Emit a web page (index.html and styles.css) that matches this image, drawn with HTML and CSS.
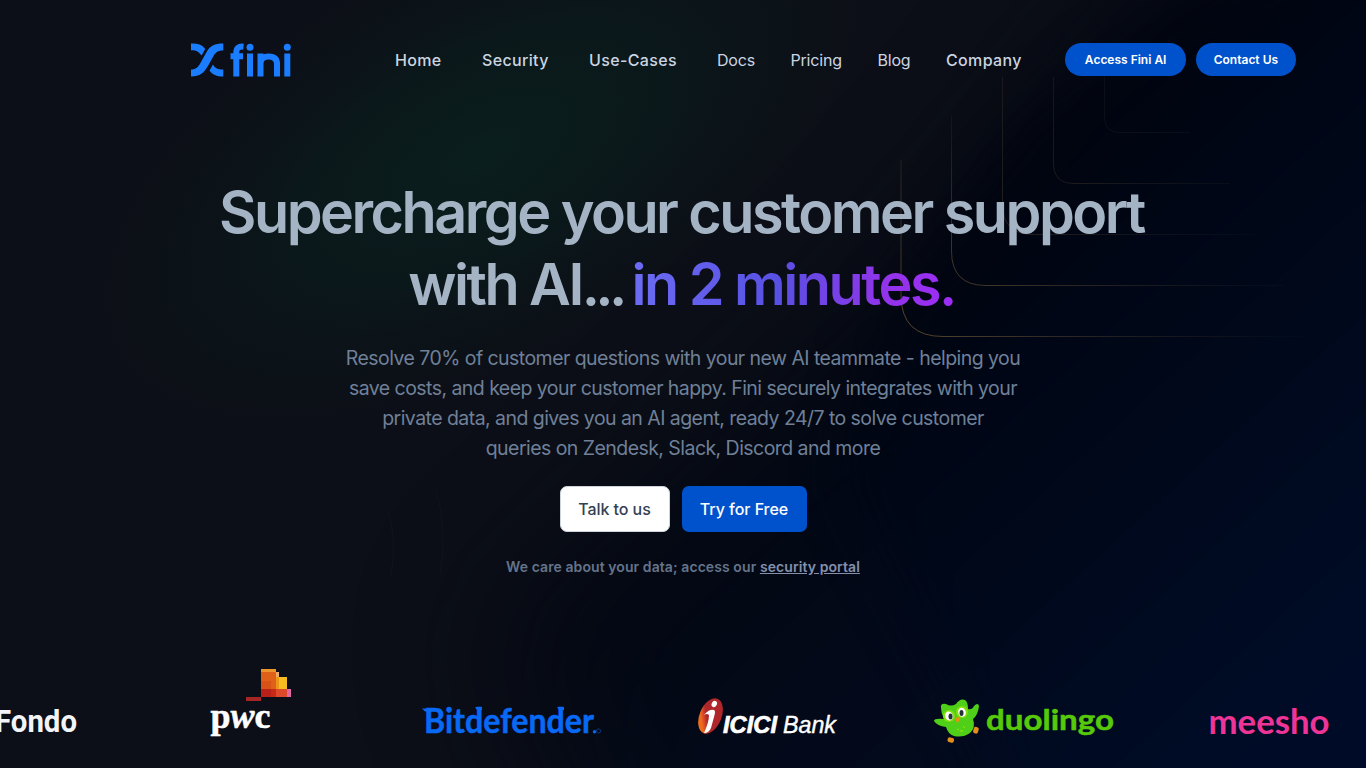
FILE: index.html
```html
<!DOCTYPE html>
<html lang="en">
<head>
<meta charset="utf-8">
<title>Fini</title>
<link rel="stylesheet" href="styles.css">
</head>
<body>
<div class="page">
<svg class="backdrop" viewBox="0 0 1366 768" aria-hidden="true">
  <defs>
    <filter id="soft" x="-50%" y="-50%" width="200%" height="200%" color-interpolation-filters="sRGB"><feGaussianBlur stdDeviation="26"/></filter>
    <filter id="wide" x="-50%" y="-50%" width="200%" height="200%" color-interpolation-filters="sRGB"><feGaussianBlur stdDeviation="70"/></filter>
    <linearGradient id="blue" gradientUnits="userSpaceOnUse" x1="1000" y1="180" x2="1400" y2="620"><stop offset="0" stop-color="#00040f"/><stop offset="1" stop-color="#000c28"/></linearGradient>
    <radialGradient id="green"><stop offset="0" stop-color="#0a1f1d"/><stop offset=".5" stop-color="#0a1c1c" stop-opacity=".65"/><stop offset="1" stop-color="#0b171b" stop-opacity="0"/></radialGradient>
    <linearGradient id="fade" gradientUnits="userSpaceOnUse" x1="900" y1="337" x2="1200" y2="37"><stop offset="0" stop-color="#5d482d" stop-opacity=".95"/><stop offset=".5" stop-color="#363029" stop-opacity=".65"/><stop offset="1" stop-color="#252a33" stop-opacity=".15"/></linearGradient>
    <linearGradient id="across" gradientUnits="userSpaceOnUse" x1="940" y1="0" x2="1320" y2="0"><stop offset="0" stop-color="#4e3f2c"/><stop offset="1" stop-color="#2b2a2a" stop-opacity="0"/></linearGradient>
    <linearGradient id="up" gradientUnits="userSpaceOnUse" x1="0" y1="310" x2="0" y2="80"><stop offset="0" stop-color="#4e3f2c"/><stop offset=".5" stop-color="#3a3129" stop-opacity=".8"/><stop offset="1" stop-color="#2b2a2a" stop-opacity="0"/></linearGradient>
  </defs>
  <rect width="1366" height="768" fill="#0c0f17"/>
  <path d="M1170 -60L1700 -100V1000H700L480 640L720 430L880 300L1040 110Z" fill="url(#blue)" opacity=".75" filter="url(#wide)"/>
  <path d="M1180 0L1700 -200V1000H1120L840 480L880 310L1020 120Z" fill="url(#blue)" opacity=".8" filter="url(#soft)"/>
  <ellipse cx="480" cy="155" rx="420" ry="205" transform="rotate(-28 480 155)" fill="url(#green)"/>
  <g fill="none" stroke="url(#fade)">
    <path d="M1104.500 77V117Q1104.500 132.500 1120 132.500H1190" opacity=".6"/>
    <path d="M1053.500 77V163Q1053.500 183.500 1074 183.500" opacity=".8"/>
    <path d="M1002.500 77V204Q1002.500 234.500 1033 234.500" opacity=".75"/>
    <path d="M986 285.500Q951.500 285.500 951.500 251"/>
    <path d="M943 336.500Q901 336.500 901 295"/>
  </g>
  <g fill="url(#across)"><path d="M1074 183h156v1h-156z" opacity=".7"/><path d="M1033 234h223v1h-223z" opacity=".6"/><path d="M986 285h298v1H986z"/><path d="M943 336h367v1H943z"/></g>
  <g fill="url(#up)"><path d="M951 115h1v136h-1z"/><path d="M900.500 160h1v135h-1z"/></g>
  <path d="M436 490Q448 530 440 575M388 510Q397 540 391 575" opacity=".5" fill="none" stroke="#141922"/>
</svg>
<header class="nav">
  <svg class="brand" viewBox="0 0 101 36" role="img" aria-label="fini">
    <g fill="#1a7cff">
      <path d="M0 .500C7 .500 11 1.500 14.200 6L10.600 12.500L8 9.800C6 7.800 4 7.200 0 7.200Z"/>
      <path d="M32.300 .500V7.500C27 7.500 25 9 22.500 13L17.500 22C13 30 9 33.500 0 33.500V26.500C5 26.500 7 24.500 10 19L15 10C19 2.500 23.500 .500 32.300 .500Z"/>
      <path d="M18.500 27.500L22 21.500C24 25.500 27 26.500 32.300 26.500V33.500C25.500 33.500 21.500 31.500 18.500 27.500Z"/>
      <circle cx="59" cy="4.200" r="3.500"/><circle cx="96.300" cy="4.200" r="3.500"/>
    </g>
    <path d="M45.300 33.500V10C45.300 4.800 47.500 3.200 52.500 3.700M39.500 13.200H52M59 10.500V33.500M69.500 10.500V33.500M69.500 20.500Q69.500 13.500 77.700 13.500Q86 13.500 86 21V33.500M96.300 10.500V33.500" fill="none" stroke="#1a7cff" stroke-width="6"/>
  </svg>
  <nav class="links">
    <a class="strong">Home</a><a class="strong">Security</a><a class="strong">Use-Cases</a><a>Docs</a><a>Pricing</a><a>Blog</a><a class="strong">Company</a>
  </nav>
  <div class="actions"><a class="pill access">Access Fini AI</a><a class="pill contact">Contact Us</a></div>
</header>
<main class="hero">
  <h1>Supercharge your customer support<br><span class="second">with AI<span class="dots">...</span> <span class="accent">in 2 minutes.</span></span></h1>
  <p class="lead">Resolve 70% of customer questions with your new AI teammate - helping you<br>save costs, and keep your customer happy. Fini securely integrates with your<br>private data, and gives you an AI agent, ready 24/7 to solve customer<br>queries on Zendesk, Slack, Discord and more</p>
  <div class="cta"><a class="btn white">Talk to us</a><a class="btn primary">Try for Free</a></div>
  <p class="note">We care about your data; access our <a>security portal</a></p>
</main>
<section class="logos">
  <svg class="fondo" viewBox="0 0 77 110"><text x="-5" y="82" textLength="82" lengthAdjust="spacingAndGlyphs" font-family="Roboto" font-weight="700" font-size="31" fill="#f3f4f7">Fondo</text></svg>
  <svg class="pwc" viewBox="210 650 82 110">
    <g shape-rendering="crispEdges"><path d="M246 697h15v4h-15z" fill="#a82525"/><path d="M261 669h15v28h-15z" fill="#df6119"/><path d="M261 669h15v3h-15z" fill="#eb952c"/><path d="M261 681h10v8h-10z" fill="#d75217"/><path d="M276 672h3v5h-3z" fill="#eeaa65"/><path d="M279 677h8v12h-8z" fill="#f6bd20"/><path d="M276 677h3v12h-3z" fill="#ee9518"/><path d="M261 689h15v8h-15z" fill="#c72918"/><path d="M261 689h10v8h-10z" fill="#b92018"/><path d="M276 689h11v8h-11z" fill="#dc492b"/><path d="M287 689h4v8h-4z" fill="#df69a0"/></g>
    <text x="210.500" y="727.500" textLength="60" lengthAdjust="spacingAndGlyphs" font-family="Liberation Serif, serif" font-weight="700" font-size="35" fill="#fff" stroke="#fff" stroke-width=".5">p<tspan font-style="italic">w</tspan>c</text>
  </svg>
  <svg class="bit" viewBox="422 650 180 110"><text x="424" y="733" textLength="170" lengthAdjust="spacingAndGlyphs" font-family="Lato" font-weight="700" font-size="34" fill="#0869f5" stroke="#0869f5" stroke-width=".5">Bitdefender</text><path d="M422 708.500h8v3h-5zM475 707h7v3h-5zM557 707h7v3h-5z" fill="#0869f5"/><circle cx="594.500" cy="731.800" r="1.700" fill="#0869f5"/><circle cx="598.500" cy="731" r="2.100" fill="none" stroke="#0a4194" stroke-width=".8"/></svg>
  <svg class="icici" viewBox="696 650 142 110">
    <defs><linearGradient id="ic" x1="1" y1="0" x2="0" y2="1"><stop offset=".6" stop-color="#b0272b"/><stop offset=".75" stop-color="#ed671e"/><stop offset="1" stop-color="#f58220"/></linearGradient></defs>
    <ellipse cx="710.500" cy="716" rx="11" ry="18.500" transform="rotate(22 710.500 716)" fill="url(#ic)"/>
    <ellipse cx="714.300" cy="704" rx="2.600" ry="3.200" transform="rotate(25 714.300 704)" fill="#fff"/>
    <path d="M704 715Q709 709 714 710Q716 711 714 717L711 728Q709 733 704 733Q709 722 709 715Q707 713 704 715Z" fill="#fff"/>
    <text x="723" y="733" textLength="54" lengthAdjust="spacingAndGlyphs" font-family="Liberation Sans" font-weight="700" font-style="italic" font-size="23.500" fill="#fff" stroke="#fff" stroke-width=".7">ICICI</text>
    <text x="783" y="733" textLength="53" lengthAdjust="spacingAndGlyphs" font-family="Liberation Sans" font-style="italic" font-size="23.500" fill="#fff" stroke="#fff" stroke-width=".4">Bank</text>
  </svg>
  <svg class="duo" viewBox="933 650 182 110">
    <path d="M941 708Q940 703 946 704Q951 707 956 704Q960 698 965 700Q968 702 968 709Q972 710 974 706Q978 702 979 706Q978 715 973 719Q976 728 970 733Q963 738 954 736Q948 734 946 727Q937 726 934 721Q934 718 944 719Q941 713 941 708Z" fill="#4fcf17"/>
    <g fill="#83df0c"><circle cx="949" cy="716" r="6"/><circle cx="962" cy="712" r="6"/></g>
    <g fill="#fff"><ellipse cx="949" cy="716" rx="3.800" ry="4.600" transform="rotate(-15 949 716)"/><ellipse cx="962" cy="712.300" rx="3.800" ry="4.600" transform="rotate(-15 962 712.300)"/></g>
    <g fill="#263238"><ellipse cx="950.500" cy="716.500" rx="2" ry="3"/><ellipse cx="961.500" cy="713" rx="2" ry="3"/></g>
    <path d="M955 718l4-1 1 3-3 3z" fill="#ed8b12"/><path d="M957 729l2 1M963 726l2 2M960 731l3 0" stroke="#91e516"/>
    <g fill="#e88c1c"><rect x="973.500" y="727" width="5" height="6.500" rx="2" transform="rotate(18 976 730)"/><rect x="947.500" y="737.500" width="6.500" height="4.800" rx="2" transform="rotate(15 950 740)"/></g>
    <text x="986" y="729.500" textLength="128" lengthAdjust="spacingAndGlyphs" font-family="Lato" font-weight="700" font-size="29" fill="#57c90b" stroke="#57c90b" stroke-width=".5" stroke-linejoin="round">duolingo</text>
  </svg>
  <svg class="meesho" viewBox="1209 650 122 110"><text x="1208.500" y="734" textLength="121" lengthAdjust="spacingAndGlyphs" font-family="Lato" font-weight="700" font-size="34" fill="#ee3597">meesho</text></svg>
</section>
</div>
</body>
</html>
```
FILE: styles.css
```css
* { box-sizing: border-box; }
body { margin: 0; background: #0c0f17; font-family: Inter, "Liberation Sans", sans-serif; }
.page { position: relative; isolation: isolate; width: 1366px; height: 768px; overflow: hidden; display: flex; flex-direction: column; }
.backdrop { position: absolute; inset: 0; width: 1366px; height: 768px; z-index: -1; }
.nav { height: 120px; display: flex; align-items: center; padding-left: 191px; flex: none; }
.brand { width: 101px; height: 36px; flex: none; margin-top: 2px; margin-right: 103px; }
.links { width: 670.4px; flex: none; display: grid; grid-template-columns: 87px 107px 128px 73.500px 87px 68.500px 1fr; font-size: 16px; line-height: 24px; letter-spacing: -.2px; color: #cbd5e1; white-space: nowrap; }
.links .strong { font-weight: 500; letter-spacing: .35px; }
.actions { display: flex; gap: 10px; padding-bottom: 1px; }
.pill { height: 33px; border-radius: 17px; background: #0052cc; color: #fff; font-size: 12px; font-weight: 600; display: flex; align-items: center; justify-content: center; }
.access { width: 120.5px; }
.contact { width: 100px; }
.hero { flex: none; height: 530px; display: flex; flex-direction: column; align-items: center; padding-top: 56px; }
h1 { margin: 0; font-size: 57.5px; line-height: 72px; font-weight: 600; letter-spacing: -2.52px; margin-right: 3px; color: #a5b4c4; text-align: center; white-space: nowrap; }
.second { letter-spacing: -2.5px; }
.dots { letter-spacing: -4.8px; }
.accent { padding-right: 4px; margin-left: -3px; margin-right: -4px; background: linear-gradient(90deg, #6c6cf3, #5850e3 45%, #9333ea 78%, #9d2df6); -webkit-background-clip: text; background-clip: text; color: transparent; }
.lead { margin: 23px 0 0; font-size: 19.5px; line-height: 30px; letter-spacing: -.55px; color: #6f8098; text-align: center; white-space: nowrap; }
.cta { margin-top: 23px; display: flex; gap: 12px; }
.btn { height: 46px; border-radius: 7px; display: flex; align-items: center; justify-content: center; font-size: 16px; font-weight: 500; letter-spacing: -.05px; }
.white { width: 110px; background: #fff; color: #344054; border: 1px solid #d0d5dd; }
.primary { width: 125px; background: #0052cc; color: #fff; }
.note { margin: 25px 0 0; font-size: 14px; line-height: 20px; font-weight: 600; letter-spacing: .08px; color: #64748b; white-space: nowrap; }
.note a { text-decoration: underline; color: #8290ad; }
.logos { flex: none; height: 110px; display: flex; }
.logos svg { flex: none; height: 110px; }
.fondo { width: 77px; margin-right: 133px; }
.pwc { width: 82px; margin-right: 130px; }
.bit { width: 180px; margin-right: 94px; }
.icici { width: 142px; margin-right: 95px; }
.duo { width: 182px; margin-right: 94px; }
.meesho { width: 122px; }
```
